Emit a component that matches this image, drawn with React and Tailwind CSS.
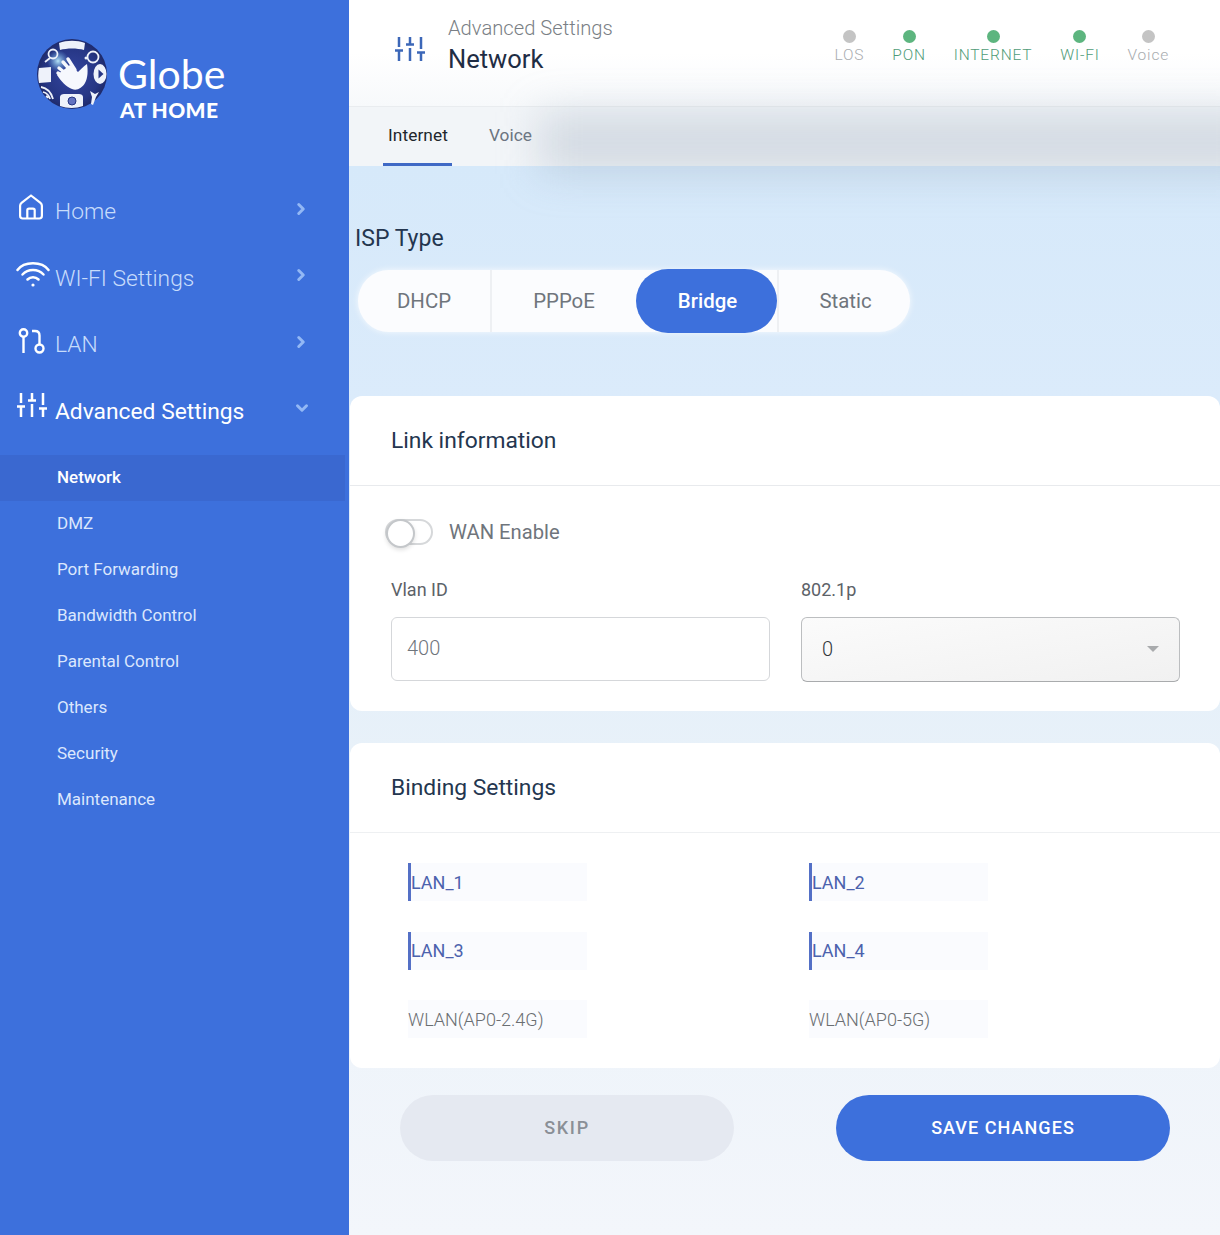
import React from "react";
import { ChevronRight, ChevronDown } from "lucide-react";

function SlidersIcon({ className }) {
  return (
    <svg viewBox="0 0 30 26" fill="none" stroke="currentColor" strokeWidth="2.500" className={className}>
      <path d="M4 1v10M0 14.500h8M4 14.500V25" />
      <path d="M15 1v7M11 8.500h8M15 12v13" />
      <path d="M26 1v12M22 16.500h8M26 16.500V25" />
    </svg>
  );
}

function HomeIcon({ className }) {
  return (
    <svg viewBox="0 0 24 26" fill="none" stroke="currentColor" strokeWidth="2.200" strokeLinejoin="round" className={className}>
      <path d="M12 1.500 2.500 8.800C1.500 9.600 1.100 10.500 1.100 11.700v10.100c0 1.600 1 2.700 2.600 2.700h16.600c1.600 0 2.600-1.100 2.600-2.700V11.700c0-1.200-.4-2.100-1.400-2.900z" />
      <path d="M8.300 24.500v-8.200c0-1 .7-1.700 1.700-1.700h4c1 0 1.700.7 1.700 1.700v8.200" />
    </svg>
  );
}

function WifiIcon({ className }) {
  return (
    <svg viewBox="0 0 34 26" fill="none" stroke="currentColor" strokeWidth="2.500" strokeLinecap="round" className={className}>
      <path d="M1.500 9C8 0 26 0 32.500 9" />
      <path d="M6.500 13.500C12 7.500 22 7.500 27.500 13.500" />
      <path d="M11.500 18.500c3-3 8-3 11 0" />
      <circle cx="17" cy="24" r="1.600" fill="currentColor" stroke="none" />
    </svg>
  );
}

function LanIcon({ className }) {
  return (
    <svg viewBox="0 0 27 26" fill="none" stroke="currentColor" strokeWidth="2.400" className={className}>
      <circle cx="5.500" cy="5" r="3.700" />
      <path d="M5.500 9v16" />
      <path d="M14 3h3c3 0 4.500 2 4.500 4.500V16" />
      <circle cx="21.500" cy="20.500" r="4" />
    </svg>
  );
}

function GlobeLogo() {
  return (
    <svg viewBox="0 0 70 70" className="w-[70px] h-[70px] shrink-0">
      <defs>
        <radialGradient id="ball" cx="50%" cy="50%" r="55%">
          <stop offset="0%" stopColor="#34459f" />
          <stop offset="70%" stopColor="#263684" />
          <stop offset="100%" stopColor="#1b2560" />
        </radialGradient>
        <radialGradient id="glow">
          <stop offset="0%" stopColor="#b6e4f7" />
          <stop offset="100%" stopColor="#5f9fe0" stopOpacity="0" />
        </radialGradient>
      </defs>
      <circle cx="35" cy="35" r="35" fill="url(#ball)" />
      <circle cx="21" cy="22" r="11" fill="url(#glow)" />
      <path d="M22 4c8-3 18-3 26 0l-1 7c-7-2-17-2-24 0z" fill="#eef2fa" />
      <path d="M2 29l12-1v15l-12 1c-1-5-1-10 0-15z" fill="#eef2fa" />
      <path d="M20 36 33 26l8 7c2-2 6-6 9-8 1 6 1 14-2 19-3 5-8 8-13 6-6-2-11-8-15-14z" fill="#f6f8fd" />
      <path d="M22 29l11 9M21 34l10 7M26 23l9 10M31 20l7 11" stroke="#f6f8fd" strokeWidth="3.400" strokeLinecap="round" />
      <ellipse cx="63" cy="35" rx="6.500" ry="10" fill="#eef2fa" />
      <path d="M61.500 30.500l5 4.500-5 4.500z" fill="#263684" />
      <path d="M23 58c0-2 2-3 4-3h15c2 0 4 1 4 3v9c-7 2.500-16 2.500-23 0z" fill="#eef2fa" />
      <circle cx="35" cy="62" r="4" fill="#6272c0" stroke="#263684" strokeWidth="1" />
      <circle cx="16" cy="15" r="4.500" fill="none" stroke="#eef2fa" strokeWidth="1.800" />
      <path d="M13 19l-5 4" stroke="#eef2fa" strokeWidth="1.800" />
      <circle cx="56" cy="18" r="5.500" fill="none" stroke="#eef2fa" strokeWidth="1.800" />
      <circle cx="49" cy="19" r="1.500" fill="#eef2fa" />
      <path d="M4 48c6 1 10 5 12 12M6 53c4 1 6 3 7 7M9 57c1 .5 1.500 1 2 2" fill="none" stroke="#eef2fa" strokeWidth="1.800" />
      <path d="M53 52l5 3 4-2-3 5-3 8-2-1 1-7z" fill="#eef2fa" />
    </svg>
  );
}

const navItems = [
  { label: "Home", icon: HomeIcon, wrapClass: "w-[38px] pl-[2px] -mt-[11px]", iconClass: "w-[24px] h-[26px]" },
  { label: "WI-FI Settings", icon: WifiIcon, wrapClass: "w-[39px] -ml-[1px] -mt-[10px]", iconClass: "w-[34px] h-[26px]" },
  { label: "LAN", icon: LanIcon, wrapClass: "w-[38px] pl-[1px] -mt-[9px]", iconClass: "w-[27px] h-[26px]" },
];

const subItems = ["Network", "DMZ", "Port Forwarding", "Bandwidth Control", "Parental Control", "Others", "Security", "Maintenance"];

const statuses = [
  { label: "LOS", on: false },
  { label: "PON", on: true },
  { label: "INTERNET", on: true },
  { label: "WI-FI", on: true },
  { label: "Voice", on: false },
];

function Sidebar() {
  return (
    <aside className="w-[349px] shrink-0 bg-[#3d70dc]">
      <div className="h-[179px] pl-[37px] pt-[39px] flex items-start gap-[11px]">
        <GlobeLogo />
        <div className="pt-[13px] text-white font-['Lato',sans-serif] leading-none">
          <div className="text-[41px] leading-[44px]">Globe</div>
          <div className="text-[21px] leading-[26px] font-black tracking-[0.400px] mt-[1px] ml-[2px]">AT HOME</div>
        </div>
      </div>

      <nav>
        {navItems.map(({ label, icon: Icon, wrapClass, iconClass }) => (
          <div key={label} className="h-[66.500px] flex items-center pl-[17px] pr-[39px]">
            <div className={`shrink-0 text-white ${wrapClass}`}>
              <Icon className={iconClass} />
            </div>
            <span className="text-[22.800px] font-light text-[#c7dcfb] flex-1">{label}</span>
            <ChevronRight className="w-[18px] h-[18px] text-[#93b8f5] -mt-[7px]" strokeWidth={4} />
          </div>
        ))}
        <div className="h-[66.500px] flex items-center pl-[17px] pr-[38px]">
          <div className="w-[38px] shrink-0 text-white -mt-[13px]">
            <SlidersIcon className="w-[30px] h-[26px]" />
          </div>
          <span className="text-[22.800px] text-white flex-1">Advanced Settings</span>
          <ChevronDown className="w-[18px] h-[18px] text-[#93b8f5] -mt-[7px]" strokeWidth={4} />
        </div>
      </nav>

      <div className="mt-[10px]">
        {subItems.map((item, i) => (
          <div
            key={item}
            className={
              i === 0
                ? "h-[46px] w-[345px] flex items-center pl-[57px] text-[17px] font-medium text-white bg-[#3a68d0]"
                : "h-[46px] flex items-center pl-[57px] text-[17px] text-[#dbe7fd]"
            }
          >
            {item}
          </div>
        ))}
      </div>
    </aside>
  );
}

function Header() {
  return (
    <header className="h-[106px] bg-gradient-to-b from-white via-white to-[#f7f9fb] flex items-start pl-[46px] pr-[51px]">
      <SlidersIcon className="w-[30px] h-[26px] mt-[36px] text-[#3c67b8]" />
      <div className="ml-[23px] mt-[14px] flex-1">
        <div className="text-[20.200px] leading-[28px] font-light text-[#7a7f85]">Advanced Settings</div>
        <div className="text-[25.500px] leading-[34px] text-[#1f2d44]">Network</div>
      </div>
      <div className="flex gap-[28px] mt-[30px]">
        {statuses.map((s) => (
          <div key={s.label} className="flex flex-col items-center">
            <span className={s.on ? "w-[13px] h-[13px] rounded-full bg-[#5db57f]" : "w-[13px] h-[13px] rounded-full bg-[#c4c4c4]"} />
            <span
              className={
                s.on
                  ? "text-[15.500px] leading-[22px] mt-[1px] tracking-[0.800px] font-light text-[#4f9c78]"
                  : "text-[15.500px] leading-[22px] mt-[1px] tracking-[0.800px] font-light text-[#a9adb0]"
              }
            >
              {s.label}
            </span>
          </div>
        ))}
      </div>
    </header>
  );
}

function Tabs() {
  return (
    <div className="h-[60px] flex border-t border-t-[#e9ecef] pl-[34px] bg-[#f2f5f8]">
      <div className="w-[69px] h-[59px] border-b-[3px] border-b-[#3f69c5] flex items-center justify-center pt-[1px] pl-[1px] text-[17.300px] tracking-[0.100px] text-[#22262c]">
        Internet
      </div>
      <div className="ml-[37px] h-[59px] flex items-center text-[17.300px] text-[#6b7480] pb-[1px]">Voice</div>
    </div>
  );
}

function IspPills() {
  return (
    <div className="ml-[9px] mt-[14px] w-[552px] h-[62px] rounded-full bg-[#fbfcfe] flex items-center text-[20.400px] text-[#6f757c] shadow-[0_0_6px_rgba(255,255,255,0.8)]">
      <div className="w-[134px] h-full flex items-center justify-center border-r-2 border-r-[#eef0f3]">DHCP</div>
      <div className="w-[144px] h-full flex items-center justify-center">PPPoE</div>
      <div className="w-[141px] h-[64px] rounded-full bg-[#3d70dc] pl-[2px] text-white font-medium flex items-center justify-center">Bridge</div>
      <div className="flex-1 h-full pl-[2px] flex items-center justify-center border-l-2 border-l-[#eef0f3]">Static</div>
    </div>
  );
}

function LinkCard() {
  return (
    <section className="mt-[64px] ml-[1px] h-[315px] bg-white rounded-[12px]">
      <h2 className="h-[90px] flex items-center pl-[41px] pt-[2px] text-[22.800px] text-[#24364f] border-b border-b-[#e8eaed]">Link information</h2>
      <div className="pl-[35px] pt-[31px] flex items-center">
        <div className="relative w-[48px] h-[26px] rounded-full border-2 border-[#d6d8da]">
          <div className="absolute -left-[1px] -top-[2px] w-[29px] h-[29px] rounded-full bg-white border-2 border-[#c4c7ca] shadow-[0_2px_4px_rgba(0,0,0,0.12)]" />
        </div>
        <span className="ml-[16px] text-[20.200px] text-[#6f757c]">WAN Enable</span>
      </div>
      <div className="pl-[41px] mt-[31px] grid grid-cols-[379px_379px] gap-x-[31px]">
        <div>
          <div className="text-[18px] leading-[24px] text-[#5c6268]">Vlan ID</div>
          <div className="mt-[15px] h-[64px] rounded-[6px] border border-[#d5d7da] flex items-center pl-[15px] pb-[2px] text-[20px] font-light text-[#6f757c]">400</div>
        </div>
        <div>
          <div className="text-[18px] leading-[24px] text-[#5c6268]">802.1p</div>
          <div className="mt-[15px] h-[65px] rounded-[6px] border border-[#bcbec0] border-b-[#a9abad] bg-gradient-to-br from-[#fbfbfb] to-[#f1f1f1] flex items-center px-[20px] pb-[2px] text-[20px] font-light text-[#33373b] justify-between">
            0
            <span className="w-0 h-0 border-x-[6px] border-x-transparent border-t-[6px] border-t-[#a9abad]" />
          </div>
        </div>
      </div>
    </section>
  );
}

function PortChip({ label, active }) {
  return (
    <div
      className={
        active
          ? "w-[179px] h-[38px] bg-[#fafbfe] border-l-[3px] border-l-[#5470c6] flex items-center text-[18px] text-[#4c62ad]"
          : "w-[179px] h-[38px] bg-[#fafbfe] flex items-center text-[18px] font-light text-[#6a6e72]"
      }
    >
      {label}
    </div>
  );
}

function BindingCard() {
  return (
    <section className="mt-[32px] ml-[1px] h-[325px] bg-white rounded-[12px]">
      <h2 className="h-[90px] flex items-center pl-[41px] pt-[2px] text-[22.800px] text-[#24364f] border-b border-b-[#eef0f2]">Binding Settings</h2>
      <div className="pl-[58px] pt-[30px] grid grid-cols-[401px_179px] gap-y-[30.500px]">
        <PortChip label="LAN_1" active />
        <PortChip label="LAN_2" active />
        <PortChip label="LAN_3" active />
        <PortChip label="LAN_4" active />
        <PortChip label="WLAN(AP0-2.4G)" />
        <PortChip label="WLAN(AP0-5G)" />
      </div>
    </section>
  );
}

export default function App() {
  return (
    <div className="w-[1220px] h-[1235px] flex overflow-hidden font-['Roboto',sans-serif]">
      <Sidebar />
      <main className="relative flex-1 min-w-0 overflow-hidden bg-[linear-gradient(180deg,#d6e9fa_165px,#dbebfb_400px,#e8f1f9_750px,#f3f6fb_1235px)]">
        <Header />
        <Tabs />
        <div className="pt-[56px] pl-[6px] text-[23px] leading-[34px] text-[#24364f]">ISP Type</div>
        <IspPills />
        <LinkCard />
        <BindingCard />
        <div className="mt-[27px] pl-[51px] flex gap-[102px]">
          <button className="w-[334px] h-[66px] rounded-full bg-[#e5e9f1] pb-[1px] text-[18px] font-medium tracking-[1.700px] text-[#8a8f96]">SKIP</button>
          <button className="w-[334px] h-[66px] rounded-full bg-[#3d70dc] pb-[1px] text-[18px] font-medium tracking-[1.050px] text-white">SAVE CHANGES</button>
        </div>
        {/* blurred smear across the tab bar, it sits over the header and the page */}
        <div className="absolute left-[190px] -right-[40px] top-[112px] h-[62px] bg-[#8d9fb3]/30 blur-[20px] pointer-events-none" />
      </main>
    </div>
  );
}
